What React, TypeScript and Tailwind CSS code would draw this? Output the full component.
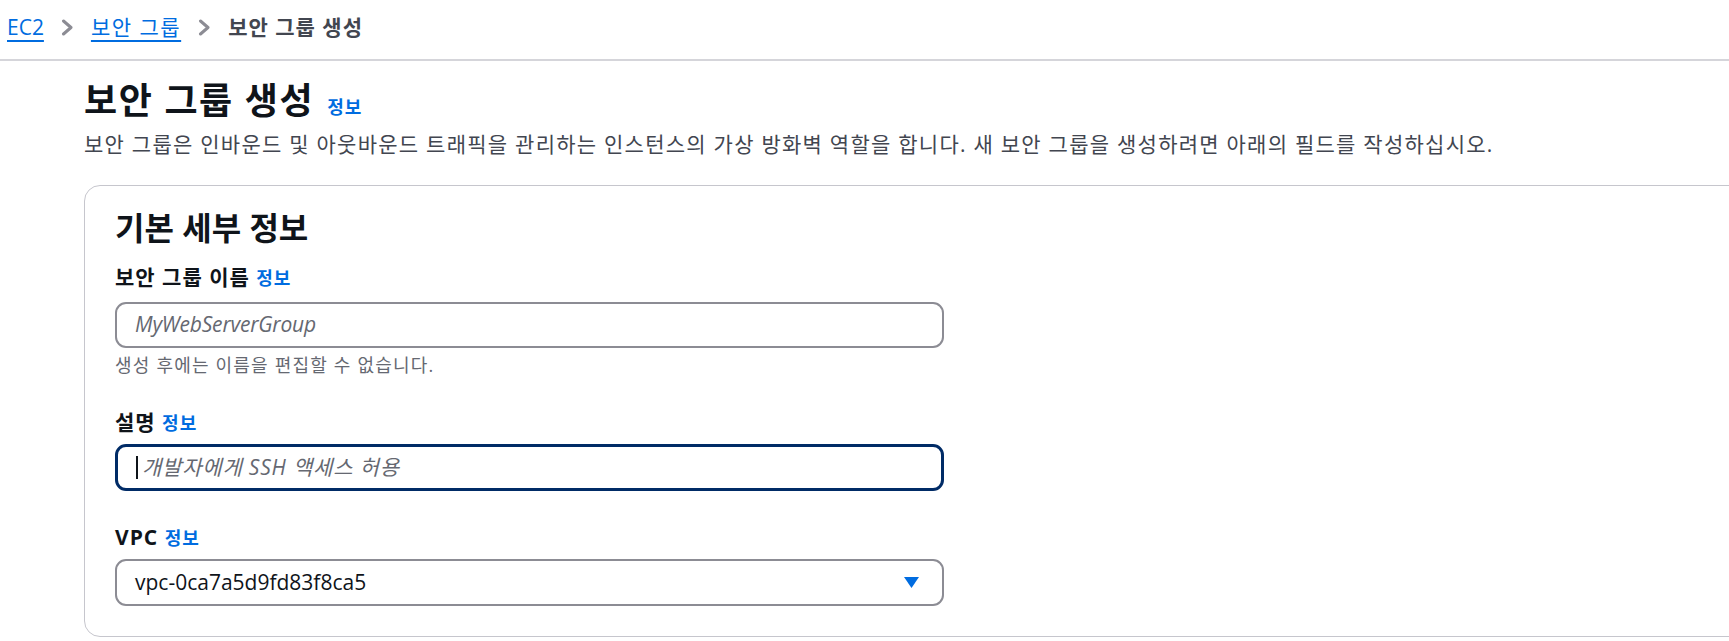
import React from 'react';

// 공통 폰트 스택
const FONT = '"Open Sans", "Noto Sans CJK KR", sans-serif';

function Chevron() {
  return (
    <svg width="13" height="17" viewBox="0 0 13 17" className="mx-[17px] shrink-0">
      <path d="M2.5 2 L10 8.5 L2.5 15" fill="none" stroke="#8c8c94" strokeWidth="3" strokeLinecap="round" strokeLinejoin="round" />
    </svg>
  );
}

function Info({ className = '' }: { className?: string }) {
  return <span className={`text-[18px] font-bold tracking-[1px] text-[#006ce0] ${className}`}>정보</span>;
}

function Label({ text }: { text: string }) {
  return (
    <div className="text-[21px] leading-[30px] font-bold tracking-[1px] text-[#0f141a]">
      {text} <Info />
    </div>
  );
}

export default function App() {
  return (
    <div className="w-full min-h-screen bg-white overflow-hidden" style={{ fontFamily: FONT }}>
      {/* 브레드크럼 */}
      <div className="flex items-center h-[61px] pl-[7px] pb-[5px] border-b-2 border-[#d5d5da] text-[21px] leading-[30px]">
        <span className="text-[#006ce0] underline decoration-[2px] underline-offset-[5px]">EC2</span>
        <Chevron />
        <span className="text-[#006ce0] tracking-[1.5px] underline decoration-[2px] underline-offset-[5px]">보안 그룹</span>
        <Chevron />
        <span className="font-bold tracking-[1px] text-[#424650]">보안 그룹 생성</span>
      </div>

      <div className="pl-[84px]">
        {/* 페이지 제목 */}
        <h1 className="mt-[18px] text-[36px] leading-[44px] font-bold tracking-[1.6px] text-[#0f141a]">
          보안 그룹 생성 <Info className="ml-[2px]" />
        </h1>
        <p className="mt-0 text-[21px] leading-[30px] tracking-[1.25px] text-[#424650]">
          보안 그룹은 인바운드 및 아웃바운드 트래픽을 관리하는 인스턴스의 가상 방화벽 역할을 합니다. 새 보안 그룹을 생성하려면 아래의 필드를 작성하십시오.
        </p>

        {/* 기본 세부 정보 카드 */}
        <div className="mt-[26px] w-[1680px] border border-[#c6c6cd] rounded-[16px] px-[30px] pt-[20px] pb-[30px]">
          <h2 className="text-[32px] leading-[44px] font-bold text-[#0f141a]">기본 세부 정보</h2>

          <div className="mt-[12px]">
            <Label text="보안 그룹 이름" />
          </div>
          <div className="mt-[9px] w-[829px] h-[46px] border-2 border-[#8c8c94] rounded-[11px] px-[18px] flex items-center">
            <span className="text-[21px] italic tracking-[-0.2px] text-[#656871]">MyWebServerGroup</span>
          </div>
          <div className="mt-[4px] text-[18px] leading-[26px] tracking-[1.2px] text-[#656871]">
            생성 후에는 이름을 편집할 수 없습니다.
          </div>

          <div className="mt-[29px]">
            <Label text="설명" />
          </div>
          <div className="mt-[6px] w-[829px] h-[47px] border-[3px] border-[#002b66] rounded-[11px] px-[18px] flex items-center">
            <span className="w-[2px] h-[23px] bg-[#0f141a] mr-[4px] shrink-0" />
            <span className="text-[21px] italic tracking-[0.8px] text-[#656871]">개발자에게 SSH 액세스 허용</span>
          </div>

          <div className="mt-[31px]">
            <Label text="VPC" />
          </div>
          <div className="mt-[6px] w-[829px] h-[47px] border-2 border-[#8c8c94] rounded-[11px] pl-[18px] pr-[23px] flex items-center justify-between">
            <span className="text-[21px] text-[#0f141a]">vpc-0ca7a5d9fd83f8ca5</span>
            <svg width="15" height="11" viewBox="0 0 15 11">
              <path d="M0 0 H15 L7.5 11 Z" fill="#006ce0" />
            </svg>
          </div>
        </div>
      </div>
    </div>
  );
}
